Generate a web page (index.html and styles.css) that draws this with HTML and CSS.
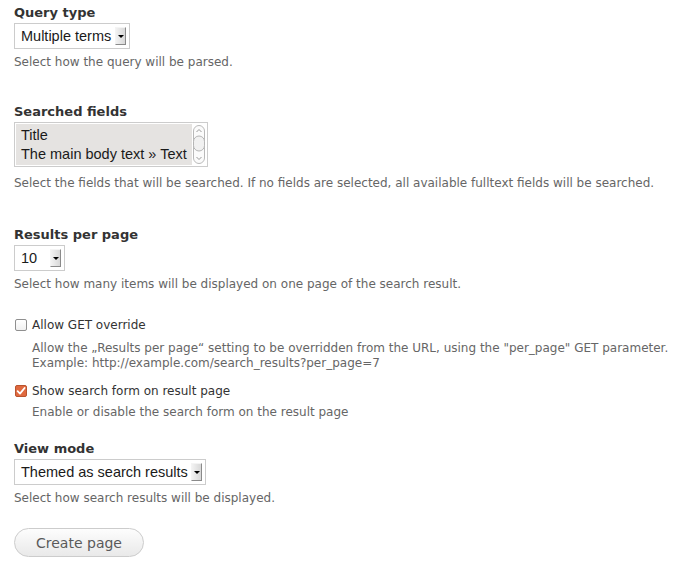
FILE: index.html
```html
<!DOCTYPE html>
<html>
<head>
<meta charset="utf-8">
<link rel="stylesheet" href="styles.css">
</head>
<body>
<form class="form">
  <div class="item item-query">
    <div class="label">Query type</div>
    <div class="select w-query"><span class="sel-text">Multiple terms</span><span class="arrow"></span></div>
    <div class="desc desc-after-select">Select how the query will be parsed.</div>
  </div>

  <div class="item item-fields">
    <div class="label">Searched fields</div>
    <div class="multi">
      <div class="options">
        <div class="opt">Title</div>
        <div class="opt">The main body text » Text</div>
      </div>
      <div class="scroll">
        <svg width="12" height="39" viewBox="0 0 12 39">
          <rect x="0.5" y="0.5" width="11" height="38" rx="5.5" fill="#fbfbfb" stroke="#b9b9b9"/>
          <path d="M3.5 7 L6 4.5 L8.5 7" fill="none" stroke="#9a9a9a" stroke-width="1"/>
          <rect x="0.5" y="11" width="11" height="15" rx="5.5" fill="#f1f1f1" stroke="#b5b5b5"/>
          <path d="M3.5 32 L6 34.5 L8.5 32" fill="none" stroke="#9a9a9a" stroke-width="1"/>
        </svg>
      </div>
    </div>
    <div class="desc desc-after-multi">Select the fields that will be searched. If no fields are selected, all available fulltext fields will be searched.</div>
  </div>

  <div class="item item-results">
    <div class="label">Results per page</div>
    <div class="select w-results"><span class="sel-text">10</span><span class="arrow"></span></div>
    <div class="desc desc-after-select">Select how many items will be displayed on one page of the search result.</div>
  </div>

  <div class="item item-get">
    <label class="check"><span class="box"></span><span class="check-label">Allow GET override</span></label>
    <div class="desc desc-check">Allow the „Results per page“ setting to be overridden from the URL, using the "per_page" GET parameter.<br>Example: http://example.com/search_results?per_page=7</div>
  </div>

  <div class="item item-show">
    <label class="check"><span class="box checked">
      <svg width="12" height="12" viewBox="0 0 12 12"><path d="M2.6 6.2 L5 8.6 L9.6 3" fill="none" stroke="#ffffff" stroke-width="1.8" stroke-linecap="round" stroke-linejoin="round"/></svg>
    </span><span class="check-label">Show search form on result page</span></label>
    <div class="desc desc-check2">Enable or disable the search form on the result page</div>
  </div>

  <div class="item item-view">
    <div class="label">View mode</div>
    <div class="select w-view"><span class="sel-text">Themed as search results</span><span class="arrow"></span></div>
    <div class="desc desc-after-select">Select how search results will be displayed.</div>
  </div>

  <div class="actions">
    <button type="button" class="button">Create page</button>
  </div>
</form>
</body>
</html>
```

FILE: styles.css
```css
html, body {
  margin: 0;
  padding: 0;
  background: #ffffff;
}
body {
  font-family: "DejaVu Sans", Verdana, sans-serif;
  color: #333333;
}
.form {
  padding: 4px 0 0 14px;
}
.item {
  display: flex;
  flex-direction: column;
  align-items: flex-start;
}
.label {
  font-weight: bold;
  font-size: 13px;
  line-height: 18px;
  color: #333333;
  margin-bottom: 1px;
}
.desc {
  font-size: 12px;
  line-height: 16px;
  color: #666666;
}
.desc-after-select { margin-top: 5px; }
.desc-after-multi { margin-top: 8px; }

.item-fields { margin-top: 33px; }
.item-results { margin-top: 35px; }
.item-get { margin-top: 25px; }
.item-show { margin-top: 12px; }
.item-view { margin-top: 20px; }

.select {
  box-sizing: border-box;
  height: 26px;
  border: 1px solid #cccccc;
  background: #ffffff;
  display: flex;
  align-items: center;
  justify-content: space-between;
  padding: 0 3px 0 6px;
  font-family: "Liberation Sans", Arial, sans-serif;
  font-size: 14.5px;
  color: #1a1a1a;
}
.w-query { width: 116px; }
.w-results { width: 51px; }
.w-view { width: 192px; }
.arrow {
  box-sizing: border-box;
  width: 11px;
  height: 18px;
  background: linear-gradient(to right, #f2f2f2, #d8d8d8);
  border-right: 1px solid #8a8a8a;
  border-bottom: 1px solid #8a8a8a;
  border-top: 1px solid #f4f4f4;
  border-left: 1px solid #f4f4f4;
  position: relative;
}
.arrow::after {
  content: "";
  position: absolute;
  left: 2px;
  top: 7px;
  border-left: 3px solid transparent;
  border-right: 3px solid transparent;
  border-top: 3px solid #000000;
}

.multi {
  box-sizing: border-box;
  width: 194px;
  height: 45px;
  border: 1px solid #cccccc;
  display: flex;
  padding: 1px 2px 1px 1px;
  gap: 1px;
  background: #ffffff;
}
.options {
  flex: 1;
  background: #e5e3e1;
  font-family: "Liberation Sans", Arial, sans-serif;
  font-size: 14.5px;
  color: #1a1a1a;
  padding: 2px 0 0 5px;
}
.opt {
  line-height: 19px;
}
.scroll {
  width: 12px;
  display: flex;
  align-items: center;
}

.check {
  display: flex;
  align-items: center;
  gap: 5px;
  height: 16px;
  margin-left: 1px;
}
.box {
  box-sizing: border-box;
  width: 12px;
  height: 12px;
  border: 1px solid #8f8f8f;
  border-radius: 2px;
  background: linear-gradient(#ffffff, #f0f0f0);
  display: flex;
}
.box.checked {
  background: #e0693f;
  border-color: #b9542f;
}
.box.checked svg { margin: -1px; }
.check-label {
  font-size: 12px;
  line-height: 16px;
  color: #333333;
}
.desc-check {
  margin-top: 8px;
  margin-left: 18px;
  line-height: 15px;
}
.desc-check2 {
  margin-top: 5px;
  margin-left: 18px;
}

.actions {
  margin-top: 22px;
}
.button {
  box-sizing: border-box;
  width: 130px;
  height: 29px;
  border: 1px solid #cccccc;
  border-radius: 15px;
  background: linear-gradient(#fdfdfd, #e9e9e9);
  font-family: "DejaVu Sans", Verdana, sans-serif;
  font-size: 14px;
  color: #5a5a5a;
  padding: 0;
}
```
